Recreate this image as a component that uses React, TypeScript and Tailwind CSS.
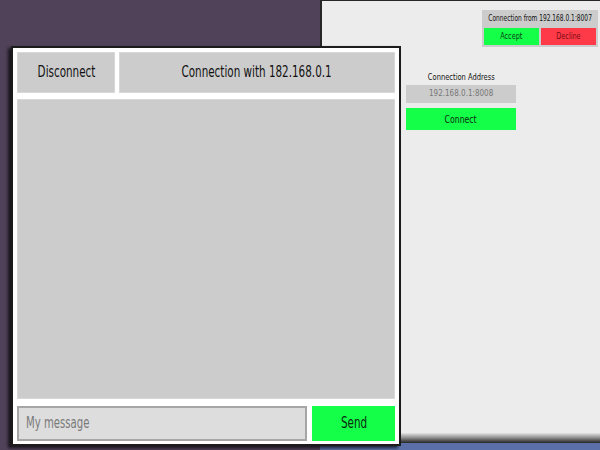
import React from 'react';

const font = { fontFamily: '"DejaVu Sans Condensed", "Liberation Sans", sans-serif' };

// the original UI font is much narrower than anything installed, so squeeze it
function Narrow({ children, className = 'scale-x-[0.77]' }: { children: React.ReactNode; className?: string }) {
  return <span className={`inline-block whitespace-nowrap ${className}`}>{children}</span>;
}

function ServerWindow() {
  return (
    <div className="absolute left-[320px] top-0 w-[280px] h-[443px] flex flex-col border-l-2 border-t border-[#262626] bg-[#ececec]">
      {/* incoming connection toast */}
      <div className="absolute right-[2px] top-[9px] w-[116px] h-[37px] bg-[#cccccc] flex flex-col px-[2px] pb-[2px]">
        <div className="h-[18px] flex items-center justify-center text-[8px] text-[#111]">
          <Narrow className="scale-x-[0.82]">Connection from 192.168.0.1:8007</Narrow>
        </div>
        <div className="flex-1 flex gap-[2px]">
          <button className="flex-1 bg-[#14ff48] text-[8px] text-[#0a3a12]">
            <Narrow className="scale-x-[0.9]">Accept</Narrow>
          </button>
          <button className="flex-1 bg-[#ff3a48] text-[8px] text-[#7a0810]">
            <Narrow className="scale-x-[0.9]">Decline</Narrow>
          </button>
        </div>
      </div>

      <div className="flex-1 flex flex-col items-start pl-[84px] pt-[70px]">
        <div className="w-[110px] flex flex-col items-center">
          <span className="text-[9px] text-[#111] leading-[12px]">
            <Narrow className="scale-x-[0.83]">Connection Address</Narrow>
          </span>
          <div className="mt-[2px] w-full h-[18px] bg-[#cccccc] flex items-center justify-center text-[9px] text-[#777]">
            <Narrow className="scale-x-[0.89]">192.168.0.1:8008</Narrow>
          </div>
          <button className="mt-[5px] w-full h-[22px] bg-[#14ff48] text-[10px] text-[#0b2a10]">
            <Narrow className="scale-x-[0.86]">Connect</Narrow>
          </button>
        </div>
      </div>

      <div className="h-[10px] bg-linear-to-b from-[#e4e4e4] via-[#8a8a8a] to-[#252525]" />
    </div>
  );
}

function ChatWindow() {
  return (
    <div className="absolute left-[11px] top-[46px] w-[390px] h-[400px] border-2 border-[#1c1c1c] bg-white flex flex-col px-[4px] pt-[4px] pb-[3px] shadow-[-3px_2px_3px_rgba(0,0,0,0.7)]">
      <div className="h-[41px] flex gap-[4px]">
        <button className="w-[98px] bg-[#cccccc] border border-[#d8d8d8] text-[15px] text-[#111]">
          <Narrow>Disconnect</Narrow>
        </button>
        <div className="flex-1 bg-[#cccccc] border border-[#d8d8d8] flex items-center justify-center text-[15px] text-[#111]">
          <Narrow>Connection with 182.168.0.1</Narrow>
        </div>
      </div>
      <div className="mt-[6px] flex-1 bg-[#cccccc] border border-[#d8d8d8]" />
      <div className="mt-[7px] h-[35px] flex gap-[5px]">
        <div className="w-[291px] bg-[#dddddd] border-2 border-[#a6a6a6] flex items-center pl-[7px] text-[15px] text-[#7a7a7a]">
          <Narrow className="scale-x-[0.75] origin-left">My message</Narrow>
        </div>
        <button className="w-[83px] bg-[#14ff48] text-[15px] text-[#0b2a10]">
          <Narrow>Send</Narrow>
        </button>
      </div>
    </div>
  );
}

export default function App() {
  return (
    <div className="relative w-[600px] h-[450px] overflow-hidden bg-[#4f4259]" style={font}>
      <div className="absolute left-[320px] top-[443px] w-[280px] h-[7px] bg-[#5b70a8]" />
      <ServerWindow />
      <ChatWindow />
    </div>
  );
}
